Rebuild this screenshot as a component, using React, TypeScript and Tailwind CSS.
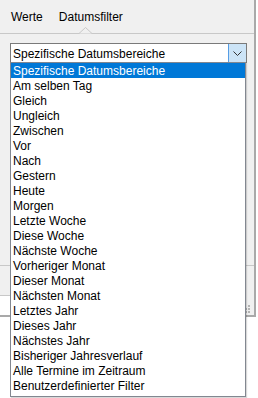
import React from "react";

const options = [
  "Spezifische Datumsbereiche",
  "Am selben Tag",
  "Gleich",
  "Ungleich",
  "Zwischen",
  "Vor",
  "Nach",
  "Gestern",
  "Heute",
  "Morgen",
  "Letzte Woche",
  "Diese Woche",
  "Nächste Woche",
  "Vorheriger Monat",
  "Dieser Monat",
  "Nächsten Monat",
  "Letztes Jahr",
  "Dieses Jahr",
  "Nächstes Jahr",
  "Bisheriger Jahresverlauf",
  "Alle Termine im Zeitraum",
  "Benutzerdefinierter Filter",
];

const font = { fontFamily: '"Liberation Sans", Arial, sans-serif' };

export default function App() {
  return (
    <div className="relative w-[258px] h-[398px] bg-white overflow-hidden text-[12px] text-black" style={font}>
      {/* filter panel */}
      <div className="w-[256px] h-[317px] bg-[#f0f0f0] border-r-2 border-b-2 border-[#a9a9a9] flex flex-col">
        {/* tabs */}
        <div className="relative h-[33px] flex items-center gap-[16px] pl-[11px] pt-[1px]">
          <span>Werte</span>
          <span>Datumsfilter</span>
          <svg className="absolute left-[79px] bottom-[-1px]" width="13" height="7" viewBox="0 0 13 7">
            <path d="M0 6.5 L6.5 0.5 L13 6.5" fill="#f0f0f0" stroke="#c8c8c8" strokeWidth="1" />
          </svg>
        </div>
        <div className="h-px bg-[#c8c8c8]" />

        {/* combo */}
        <div className="mt-[9px] ml-[10px] w-[237px] h-[20px] flex border border-[#7a7a7a] bg-white">
          <div className="flex-1 flex items-center pl-[2px] pt-px">Spezifische Datumsbereiche</div>
          <div className="w-[18px] h-full flex items-center justify-center bg-[#cce4f7] border-l border-[#569de5]">
            <svg width="9" height="5" viewBox="0 0 9 5">
              <path d="M0.5 0.5 L4.5 4.5 L8.5 0.5" fill="none" stroke="#333" strokeWidth="1" />
            </svg>
          </div>
        </div>

        <div className="flex-1" />

        {/* footer strip */}
        <div className="h-[50px] border-t border-[#c8c8c8] flex">
          <div className="w-[10px] flex flex-col">
            <div className="flex-1" />
            <div className="h-[20px] bg-white border-t border-[#c8c8c8]" />
          </div>
          <div className="flex-1" />
          <div className="w-[9px] flex flex-col justify-end pb-[2px]">
            <svg width="6" height="8" viewBox="0 0 6 8">
              <rect x="3" y="0" width="2" height="2" fill="#b4b4b4" />
              <rect x="0" y="3" width="2" height="2" fill="#b4b4b4" />
              <rect x="3" y="3" width="2" height="2" fill="#b4b4b4" />
              <rect x="0" y="6" width="2" height="2" fill="#b4b4b4" />
              <rect x="3" y="6" width="2" height="2" fill="#b4b4b4" />
            </svg>
          </div>
        </div>
      </div>

      {/* open dropdown list */}
      <div className="absolute left-[10px] top-[62px] w-[236px] h-[335px] bg-white border border-[#828790] shadow-[1px_1px_1px_rgba(0,0,0,0.15)] flex flex-col">
        {options.map((o, i) => (
          <div
            key={o}
            className={
              "h-[15px] shrink-0 flex items-center pl-[2px] pt-px whitespace-nowrap " +
              (i === 0 ? "bg-[#0078d7] text-white" : "")
            }
          >
            {o}
          </div>
        ))}
      </div>
    </div>
  );
}
